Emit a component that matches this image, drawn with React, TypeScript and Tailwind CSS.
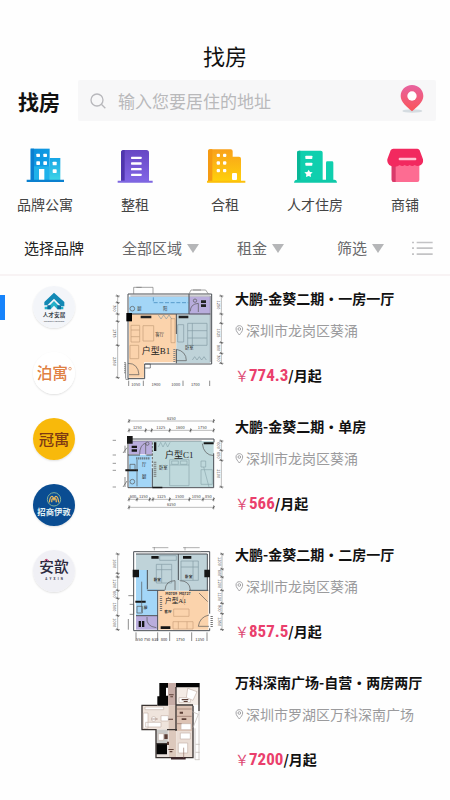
import type { ReactNode } from "react";

type Category = { label: string; icon: ReactNode };
type Brand = { name: string; logo: ReactNode };
type Listing = { title: string; address: string; price: string; plan: ReactNode };

const BLUE = "#a3d6f7";
const GREY = "#bfd3d9";
const PEACH = "#fbd3ac";
const PURPLE = "#b9addd";
const LINE = "#4a4f55";

const categories: Category[] = [
  {
    label: "品牌公寓",
    icon: (
      <svg viewBox="69 54 132 108" className="h-9 w-11" aria-hidden="true">
        <defs>
          <linearGradient id="apt" x1="0" y1="0" x2="1" y2="1">
            <stop offset="0" stopColor="#0c8fdc" />
            <stop offset="1" stopColor="#12a4ea" />
          </linearGradient>
          <linearGradient id="aptSide" x1="0" y1="0" x2="0" y2="1">
            <stop offset="0" stopColor="#16a5e6" />
            <stop offset="1" stopColor="#3fd6e6" />
          </linearGradient>
        </defs>
        <path d="M92 59h57v96H92z" fill="url(#apt)" />
        <path d="M92 59h10v96H92z" fill="#0b7fd0" />
        <path d="M102 112h47v43h-47z" fill="#1fb2ea" />
        <path d="M149 87h32v68h-32z" fill="url(#aptSide)" />
        <path d="M80 152h112v7H80z" fill="#0b80cf" />
        <g fill="#fff">
          <rect x="109" y="74" width="11" height="10" rx="2" />
          <rect x="130" y="74" width="11" height="10" rx="2" />
          <rect x="109" y="97" width="11" height="11" rx="2" />
          <rect x="130" y="97" width="11" height="11" rx="2" />
          <rect x="158" y="98" width="12" height="11" rx="2" />
          <rect x="158" y="121" width="12" height="11" rx="2" />
          <path d="M117 120h16v32h-16z" />
        </g>
      </svg>
    ),
  },
  {
    label: "整租",
    icon: (
      <svg viewBox="339 54 132 108" className="h-9 w-11" aria-hidden="true">
        <defs>
          <linearGradient id="whole" x1="0" y1="0" x2="0" y2="1">
            <stop offset="0" stopColor="#6747c4" />
            <stop offset="1" stopColor="#8266e6" />
          </linearGradient>
        </defs>
        <path d="M363 71q0-8 8-8h68q8 0 8 8v88h-84z" fill="url(#whole)" />
        <path d="M363 71q0-8 8-8h3v92h-11z" fill="#4f35ad" />
        <path d="M353 155h105v6H353z" fill="#7d66e0" />
        <g fill="#fff">
          <rect x="393" y="83" width="32" height="7" rx="2" />
          <rect x="393" y="100" width="32" height="7" rx="2" />
          <rect x="393" y="117" width="32" height="7" rx="2" />
          <rect x="393" y="134" width="32" height="7" rx="2" />
        </g>
      </svg>
    ),
  },
  {
    label: "合租",
    icon: (
      <svg viewBox="609 54 132 108" className="h-9 w-11" aria-hidden="true">
        <defs>
          <linearGradient id="share" x1="0" y1="0" x2="0" y2="1">
            <stop offset="0" stopColor="#f9a11b" />
            <stop offset="1" stopColor="#ffd20a" />
          </linearGradient>
        </defs>
        <path d="M624 67q0-6 6-6h62q6 0 6 6v16h19q6 0 6 6v71h-99z" fill="url(#share)" />
        <path d="M624 67q0-6 6-6h7v96h-13z" fill="#f59a12" />
        <path d="M621 155h115v6H621z" fill="#fcbf0c" />
        <g fill="#fff">
          <rect x="650" y="74" width="10" height="10" rx="3" />
          <rect x="669" y="74" width="10" height="10" rx="3" />
          <rect x="650" y="97" width="10" height="10" rx="3" />
          <rect x="669" y="97" width="10" height="10" rx="3" />
          <rect x="650" y="120" width="10" height="10" rx="3" />
          <rect x="669" y="120" width="10" height="10" rx="3" />
          <rect x="696" y="132" width="15" height="21" rx="3" />
        </g>
      </svg>
    ),
  },
  {
    label: "人才住房",
    icon: (
      <svg viewBox="207 54 132 108" className="h-9 w-11" aria-hidden="true">
        <path d="M219 71q0-6 6-6h65q6 0 6 6v84h-77z" fill="#0fcfae" />
        <path d="M219 71q0-6 6-6h4v90h-10z" fill="#08b797" />
        <path d="M306 101q0-4 4-4h14q4 0 4 4v56h-22z" fill="#0fcfae" />
        <path d="M210 161q1-9 9-9h112q7 0 8 9z" fill="#0fc9a9" />
        <g fill="#fff">
          <rect x="244" y="80" width="21" height="10" rx="2" />
          <rect x="244" y="101" width="21" height="9" rx="2" />
          <path d="m254 122 4 7 8 1-6 6 1 8-7-3-8 3 1-8-6-6 9-1z" />
        </g>
      </svg>
    ),
  },
  {
    label: "商铺",
    icon: (
      <svg viewBox="477 54 132 108" className="h-9 w-11" aria-hidden="true">
        <path d="M503 104h83v49q0 6-6 6h-71q-6 0-6-6z" fill="#fd6c92" />
        <path d="M503 104h12v55h-6q-6 0-6-6z" fill="#d93a6a" />
        <path
          d="M508 59h72q5 0 7 5l10 27q2 13-8 18-9 5-17-1-7 6-15 0-7 6-15 0-7 6-15 0-8 7-18 5-17-1-19-16-1-4 1-9l9-24q2-5 8-5z"
          fill="#f2295f"
        />
        <rect x="524" y="86" width="53" height="8" rx="3" fill="#ffc3d2" />
      </svg>
    ),
  },
];

const brands: Brand[] = [
  {
    name: "人才安居",
    logo: (
      <svg viewBox="99 48 126 126" className="size-full">
        <circle cx="162" cy="111" r="63" fill="#f3f5f9" />
        <path d="m162 68 31 28v13h-9l-22-23-20 20h-9V96z" fill="#1389b5" />
        <path d="M134 110h11l17-17 17 17h11v8h-18l-10-11-10 11h-18z" fill="#22b0c9" />
        <path d="M142 106h10v12h-10zM172 106h11v12h-11z" fill="#0d6f9e" />
        <text x="162" y="142" textAnchor="middle" fontSize="17" fontWeight="700" fill="#39424b">
          人才安居
        </text>
        <text x="162" y="155" textAnchor="middle" fontSize="7" fontWeight="700" fill="#59626b" className="font-[Roboto,sans-serif]">
          TALENTS HOUSING
        </text>
      </svg>
    ),
  },
  {
    name: "泊寓",
    logo: (
      <svg viewBox="99 246 126 126" className="size-full">
        <circle cx="162" cy="309" r="63" fill="#fff" />
        <text x="157" y="327" textAnchor="middle" fontSize="47" fontWeight="500" fill="#df8042">
          泊寓
        </text>
        <circle cx="210" cy="296" r="4" fill="none" stroke="#df8042" strokeWidth="2" />
      </svg>
    ),
  },
  {
    name: "冠寓",
    logo: (
      <svg viewBox="99 438 126 126" className="size-full">
        <circle cx="162" cy="501" r="63" fill="#f8b90b" />
        <text x="162" y="518" textAnchor="middle" fontSize="46" fontWeight="500" fill="#7d3a13">
          冠寓
        </text>
      </svg>
    ),
  },
  {
    name: "招商伊敦",
    logo: (
      <svg viewBox="99 156 126 126" className="size-full">
        <circle cx="162" cy="219" r="63" fill="#0a4d92" />
        <circle cx="162" cy="202" r="20" fill="none" stroke="#7fae9a" strokeWidth="3" />
        <path
          d="M148 211q2-18 8-18 4 0 6 12 2-12 6-12 6 0 8 18M155 211q0-10 3-12M169 211q0-10-3-12"
          fill="none"
          stroke="#e7b65c"
          strokeWidth="4"
        />
        <text x="162" y="250" textAnchor="middle" fontSize="25" fontWeight="700" fill="#e2f1f3">
          招商伊敦
        </text>
      </svg>
    ),
  },
  {
    name: "安歆",
    logo: (
      <svg viewBox="99 357 126 126" className="size-full">
        <circle cx="162" cy="420" r="63" fill="#f0f0f5" />
        <text x="162" y="424" textAnchor="middle" fontSize="44" fontWeight="500" fill="#2c2a3e">
          安歆
        </text>
        <path d="m133 390 7-5 7 5" fill="none" stroke="#e0457b" strokeWidth="3" />
        <text
          x="162"
          y="447"
          textAnchor="middle"
          fontSize="9"
          fontWeight="700"
          fill="#3b394c"
          className="font-[Roboto,sans-serif] whitespace-pre"
        >
          {"A   Y   X   I   N"}
        </text>
      </svg>
    ),
  },
];

type RulerProps = { at: number; stops: number[]; labels: string[]; vertical?: boolean };

// Dimension line with a tick at every stop and the measure beside each span
function Ruler({ at, stops, labels, vertical = false }: RulerProps) {
  const first = stops[0];
  const last = stops[stops.length - 1];
  return (
    <g transform={vertical ? `translate(${at} 0) rotate(90)` : `translate(0 ${at})`}>
      <path d={`M${first} 0H${last}`} stroke="#777" strokeWidth="1.5" />
      {stops.map((stop) => (
        <path key={stop} d={`M${stop} -6v12M${stop - 4} 3l8-6`} stroke="#444" strokeWidth="2" />
      ))}
      {labels.map((label, i) => (
        <text
          key={i}
          x={(stops[i] + stops[i + 1]) / 2}
          y={vertical ? 13 : -3}
          fontSize="12"
          textAnchor="middle"
          fill="#444"
        >
          {label}
        </text>
      ))}
    </g>
  );
}

function PlanB1() {
  return (
    <svg viewBox="0 -12 375 384" className="h-32 w-[125px] shrink-0" role="img" aria-label="户型B1">
      <Ruler at={38} vertical stops={[48, 68, 102, 124, 196, 293]} labels={["", "700", "", "1775", "2350"]} />
      <Ruler at={349} vertical stops={[48, 102, 130, 188, 220, 250]} labels={["1250", "", "1025", "900", "700"]} />
      <path d="M72 50h180v52H72z" fill={BLUE} />
      <path d="M252 50h64v54h-64z" fill={PURPLE} />
      <path d="M72 102h142v145h-97v46H72z" fill={PEACH} />
      <path d="M214 104h102v145H214z" fill={GREY} />
      <g fill="none" stroke={LINE} strokeWidth="3">
        <path d="M69 42h251v210H119v44H69zM252 42v60M214 102v60M214 208v42M69 102h247" />
        <path d="M76 48h240v198" strokeWidth="1.5" />
        <path d="M119 252h17v12h-17M62 250v46M62 298h10" strokeWidth="2" />
      </g>
      <path d="M86 42V22h58v20M252 42l6-12h44l8 12M94 22h16M264 30h24" fill="none" stroke="#777" strokeWidth="2" />
      <path d="M145 52v16h105" fill="none" stroke="#347fb5" strokeWidth="2" strokeDasharray="12 5" />
      <path d="M64 99h17v25H64z" />
      <path d="M107 107h32v8h-32zM221 107h29v8h-29zM288 61h15v8h-15zM288 73h15v8h-15z" fill="#222" />
      <g fill="none" stroke="#c49f79" strokeWidth="2">
        <path d="M114 137h32v46h-32zM78 136h26v50H78zM78 150h26M78 170h26M75 196h26v40H75zM198 116h12v72h-12z" />
      </g>
      <g fill="none" stroke="#839ca5" strokeWidth="2">
        <path d="M248 130h58v66h-58zM262 130v66M248 152h58M248 174h58M218 134h18v52h-18z" />
        <path d="m262 240 7-10 7 10 7-10 7 10 7-10 7 10M160 105l8 12 8-12 8 12 8-12 8 12" />
      </g>
      <g fill="none" stroke="#555" strokeWidth="2">
        <path d="M69 250q30 0 33 34H72M214 208q30 6 30 34h-30M256 94q0-22 24-24v26" />
        <circle cx="82" cy="86" r="7" />
        <circle cx="270" cy="62" r="5" />
      </g>
      <path d="M60 280v-36M208 246v-40" stroke="#888" strokeWidth="6" strokeDasharray="3 3" />
      <g fontSize="13" fill="#333">
        <text x="97" y="89">厨</text>
        <text x="174" y="89">阳</text>
        <text x="151" y="168">客厅</text>
        <text x="240" y="206">卧室</text>
      </g>
      <text x="110" y="223" fontSize="27" fill="#222" className="font-['Liberation_Serif','Noto_Sans_CJK_SC',serif]">
        户型B1
      </text>
      <g fontSize="12" fill="#444" textAnchor="middle">
        <text x="92" y="318">1050</text>
        <text x="153" y="318">1900</text>
        <text x="212" y="318">1000</text>
        <text x="271" y="318">1700</text>
      </g>
      <path d="M71 302v16M115 302v16M234 302v16M314 302v16" stroke="#555" strokeWidth="2" />
    </svg>
  );
}

function PlanC1() {
  return (
    <svg viewBox="0 -3 375 384" className="h-32 w-[125px] shrink-0" role="img" aria-label="户型C1">
      <Ruler at={48} stops={[72, 326]} labels={["6350"]} />
      <Ruler at={76} stops={[72, 122, 140, 194, 257, 326]} labels={["1250", "", "1325", "1600", "1750"]} />
      <Ruler at={283} stops={[72, 96, 134, 144, 194, 253, 294, 326]} labels={["600", "1350", "", "1325", "1500", "1050", "850"]} />
      <Ruler at={307} stops={[72, 326]} labels={["6350"]} />
      <Ruler at={349} vertical stops={[108, 136, 166, 246]} labels={["600", "650", "2100"]} />
      <path d="M23 106h10M23 150h10M23 175h10M23 196h10M23 246h10" stroke="#666" strokeWidth="2" />
      <path d="M72 108h70v40H72z" fill={PURPLE} />
      <path d="M72 150h68v96H72z" fill={BLUE} />
      <path d="M142 108h184v138H142z" fill="#bfd9dc" />
      <g fill="none" stroke={LINE} strokeWidth="3">
        <path d="M69 102h258v10M69 102v146h257V145M69 150h36M124 150h18M142 190v56" />
        <path d="M82 108h208" strokeWidth="1.5" />
      </g>
      <path d="M142 112v78" stroke="#666" strokeWidth="3" strokeDasharray="7 4" />
      <path d="M66 93h17v23H66zM147 112h7v26h-7zM61 193h38v6H61zM296 112h30v6h-30zM80 122h16v7H80zM80 133h16v7H80zM142 245h30v5h-30z" fill="#171717" />
      <g fill="none" stroke="#555" strokeWidth="2">
        <path d="M292 116q4 34 34 36M104 148q0-28 18-34v34" />
        <path d="M75 178h15v16H75zM96 164v80" />
        <circle cx="82" cy="230" r="7" />
        <circle cx="127" cy="116" r="5" />
        <path d="M60 122v22M60 216v30M54 144l12-16M54 246l12-18" />
      </g>
      <g fill="none" stroke="#8ba8ad" strokeWidth="2">
        <path d="M194 164h58v78h-58zM194 180h58M200 168h20v10h-20zM226 168h20v10h-20z" />
        <path d="m160 126 7-14 7 14 7-14 7 14 7-14M302 168h-14v18h14zM288 194h34v44h-34zM296 186l16 60" />
      </g>
      <path d="M150 170v46" stroke="#777" strokeWidth="8" strokeDasharray="3 3" />
      <path d="M94 160h40" stroke="#555" strokeWidth="7" strokeDasharray="3 3" />
      <g fontSize="13" fill="#222">
        <text x="111" y="182">厅</text>
        <text x="111" y="219">厨</text>
        <text x="162" y="191">卧室</text>
      </g>
      <text x="180" y="159" fontSize="27" fill="#222" className="font-['Liberation_Serif','Noto_Sans_CJK_SC',serif]">
        户型C1
      </text>
    </svg>
  );
}

function PlanA1() {
  return (
    <svg viewBox="0 -9 375 384" className="h-32 w-[125px] shrink-0" role="img" aria-label="户型A1">
      <Ruler at={38} vertical stops={[57, 115, 126, 166, 190, 242, 284]} labels={["1600", "", "1200", "600", "1500", "1000"]} />
      <Ruler at={351} vertical stops={[57, 102, 126, 166, 205, 236, 284]} labels={["1200", "600", "1200", "1100", "800", "1350"]} />
      <path d="M93 57h130v110H93z" fill={GREY} />
      <path d="M223 57h84v110h-84z" fill={GREY} />
      <path d="M93 105h34v58h30v78H93z" fill={BLUE} />
      <path d="M93 242h66v42H93z" fill={PURPLE} />
      <path d="M160 168h150v116H160z" fill={PEACH} />
      <g fill="none" stroke={LINE} strokeWidth="3">
        <path d="M86 50h228v186M314 280v7H86V50M93 57h214v110M220 57v78M127 105v58M158 166v120M93 242h66" />
        <path d="M127 166h52M252 166h58" />
      </g>
      <path d="M104 50h76M204 50h84M142 38h48M234 38h50M148 36v10M240 36v10" stroke="#888" strokeWidth="2" />
      <path d="M83 104h19v23H83zM298 104h17v23h-17zM139 63h22v8h-22zM234 63h25v8h-25zM91 197h31v6H91zM167 274h29v8h-29zM101 258h7v18h-7zM111 258h7v18h-7z" fill="#151515" />
      <g fill="none" stroke="#839ca5" strokeWidth="2">
        <path d="M154 88h46v56h-46zM154 104h46M170 88v56M228 78h52v58h-52zM264 78v58M228 96h52M164 62h50v14h-50z" />
      </g>
      <g fill="none" stroke="#cba27b" strokeWidth="2">
        <path d="M206 222h46v22h-46zM204 260h60v22h-60zM220 260v22M246 260v22M240 176q-14 20 0 34" />
      </g>
      <g fill="none" stroke="#555" strokeWidth="2">
        <path d="M180 165q2-28 30-28v28M224 137q30 0 32 28M282 174l26 26M280 274q4-28 32-34M280 274h32M126 246q-4 28 28 32" />
        <path d="M96 214h16v20H96zM110 140v92M70 182h16M74 208h12v30H74M70 252v32" />
      </g>
      <path d="M320 276v-36M168 228v-44" stroke="#777" strokeWidth="7" strokeDasharray="3 3" />
      <g fontSize="11" fontWeight="700" fill="#333">
        <text x="181" y="179">M0709</text>
        <text x="222" y="179">M0727</text>
        <text x="146" y="138">卧室</text>
        <text x="240" y="130">卧室</text>
        <text x="178" y="234">客厅</text>
        <text x="116" y="222">厨</text>
      </g>
      <text x="180" y="205" fontSize="20" fill="#222" className="font-['Liberation_Serif','Noto_Sans_CJK_SC',serif]">
        户型A1
      </text>
      <g fontSize="12" fill="#333" textAnchor="middle">
        <text x="103" y="318">550</text>
        <text x="126" y="318">750</text>
        <text x="150" y="318">630</text>
        <text x="177" y="318">800</text>
        <text x="226" y="318">1750</text>
        <text x="284" y="318">1350</text>
      </g>
      <path d="M93 292v26M158 292v26M194 292v26M260 292v26M306 292v26" stroke="#555" strokeWidth="2" />
    </svg>
  );
}

function PlanVanke() {
  return (
    <svg viewBox="0 -15 375 384" className="h-32 w-[125px] shrink-0" role="img" aria-label="两房两厅户型图">
      <path d="M189 54h24v68h-24z" fill="#c6aca6" />
      <path d="M215 66h68v54h-68z" fill="#f4ece6" />
      <path d="M112 122h104v72H112z" fill="#efe4dc" />
      <path d="M191 122h23v156h-23z" fill="#dcc8bc" />
      <path d="M214 122h48v76h-48z" fill="#ddc3b4" />
      <path d="M214 198h50v78h-50z" fill="#eaddd5" />
      <path d="M154 194h38v84h-38z" fill="#e9e1dc" />
      <path d="M154 194h34v40h-34z" fill="#c9c9c7" />
      <path d="M163 54h26v14h-6v24h6v30h-32V94h6zM213 54h71v13h-71zM154 237h32v31h-32z" fill="#050505" />
      <g fill="none" stroke="#3b3432" strokeWidth="4">
        <path d="M157 121h-46v73h42v84h111v-80M213 66v54h51M282 66v72M186 194h30M213 122v76M264 122v76M154 236h34" />
      </g>
      <path d="M282 138v146M270 190v94h14M262 140l18 8-16 40M272 238h12M272 262h12" fill="none" stroke="#bbb3af" strokeWidth="2" />
      <path d="M198 280h44" stroke="#3a2428" strokeWidth="7" />
      <g fill="#fff" stroke="#c5b4aa" strokeWidth="2">
        <path d="M115 144h14v46h-14zM122 172h46v14h-46zM220 234h28v30h-28zM222 98h34v14h-34zM228 176h30v18h-30zM160 206h16v20h-16z" />
        <circle cx="146" cy="162" r="7" />
        <path d="M168 152h22v16h-22zM248 70l28 10-12 26-20-8zM120 126h56v8h-56zM226 204h30v18h-30z" />
      </g>
      <g fill="#5b3e36">
        <path d="M192 88h14v3h-14zM196 94h8v3h-8zM230 102h20v4h-20zM236 108h12v3h-12zM224 140h10v6h-10zM230 160h14v5h-14zM190 161h14v3h-14zM178 208h10v14h-10zM190 252h16v3h-16zM194 258h8v4h-8zM186 230h6v10h-6z" />
      </g>
      <path d="M236 248v30M140 162h18M216 132h44M216 154h44M216 176h14" stroke="#8f7065" strokeWidth="2" />
    </svg>
  );
}

const listings: Listing[] = [
  { title: "大鹏-金葵二期・一房一厅", address: "深圳市龙岗区葵涌", price: "774.3", plan: <PlanB1 /> },
  { title: "大鹏-金葵二期・单房", address: "深圳市龙岗区葵涌", price: "566", plan: <PlanC1 /> },
  { title: "大鹏-金葵二期・二房一厅", address: "深圳市龙岗区葵涌", price: "857.5", plan: <PlanA1 /> },
  { title: "万科深南广场-自营・两房两厅", address: "深圳市罗湖区万科深南广场", price: "7200", plan: <PlanVanke /> },
];

function SearchBar() {
  return (
    <div className="mt-2 flex items-center gap-[18px] pr-[14px] pl-[18px]">
      <h2 className="shrink-0 text-[21px] leading-8 font-bold">找房</h2>
      <div className="flex h-[41px] min-w-0 flex-1 items-center rounded-xs bg-[#f7f7f8] px-3">
        <svg viewBox="0 0 48 48" className="size-4 shrink-0" fill="none" stroke="#b8b8bc" strokeWidth="4" aria-hidden="true">
          <circle cx="21" cy="21" r="18" />
          <path d="m34 34 12 12" />
        </svg>
        <input
          type="search"
          aria-label="搜索地址"
          placeholder="输入您要居住的地址"
          className="ml-3 min-w-0 flex-1 bg-transparent text-[17px] leading-6 outline-none placeholder:text-[#b9b9bb]"
        />
        <button type="button" aria-label="定位" className="shrink-0 pb-1">
          <svg viewBox="0 0 72 84" className="h-7 w-6">
            <defs>
              <linearGradient id="pin" x1="0" y1="0" x2="0" y2="1">
                <stop offset="0" stopColor="#e763a0" />
                <stop offset="1" stopColor="#fb5457" />
              </linearGradient>
            </defs>
            <ellipse cx="37" cy="78" rx="30" ry="5" fill="#d5dce1" />
            <path d="M36 0C16 0 2 15 2 33c0 19 20 33 34 46 14-13 34-27 34-46C70 15 56 0 36 0z" fill="url(#pin)" />
            <circle cx="36" cy="33" r="14" fill="#fff" />
          </svg>
        </button>
      </div>
    </div>
  );
}

function FilterSelect({ label }: { label: string }) {
  return (
    <label className="flex items-center gap-1 text-[#68686a]">
      <select aria-label={label} className="appearance-none bg-transparent text-[15px] leading-6 outline-none">
        <option>{label}</option>
      </select>
      <svg viewBox="0 0 12 9" className="h-[9px] w-3 shrink-0" fill="#b5b6b8" aria-hidden="true">
        <path d="M0 0h12L6 9z" />
      </svg>
    </label>
  );
}

function ListingRow({ title, address, price, plan }: Listing) {
  return (
    <li className="flex h-32 gap-[5px]">
      {plan}
      <div className="min-w-0 flex-1 pt-3">
        <h3 className="text-sm leading-5 font-bold">{title}</h3>
        <p className="mt-3 flex items-center gap-[2px] text-sm leading-5 text-[#9b9b9d]">
          <svg viewBox="0 0 27 33" className="h-[11px] w-[9px] shrink-0" fill="none" stroke="#a5a5a8" strokeWidth="3" aria-hidden="true">
            <path d="M13 2C7 2 3 6 3 12c0 7 6 12 10 18 4-6 10-11 10-18 0-6-4-10-10-10z" />
            <circle cx="13" cy="12" r="4" />
          </svg>
          {address}
        </p>
        <p className="mt-6 flex items-baseline text-sm leading-[22px] font-bold">
          <span className="font-normal text-[#dd4a74]">￥</span>
          <span className="font-['Roboto_Condensed','Liberation_Sans',sans-serif] text-[17px] leading-[22px] text-[#ea3f6c]">
            {price}
          </span>
          <span>/月起</span>
        </p>
      </div>
    </li>
  );
}

export default function App() {
  return (
    <main className="min-h-screen bg-[#fefefe] pt-[38px] font-['Noto_Sans_CJK_SC',sans-serif] text-[#111]">
      <h1 className="text-center text-[22px] leading-[34px]">找房</h1>
      <SearchBar />

      <nav className="mt-[26px] grid grid-cols-5">
        {categories.map(({ label, icon }) => (
          <a key={label} href="#" className="flex flex-col items-center gap-2.5 text-sm leading-[22px] text-[#444]">
            {icon}
            {label}
          </a>
        ))}
      </nav>

      <div className="mt-[7px] grid h-[54px] grid-cols-[98fr_115fr_100fr_75fr_21fr] items-center border-b-2 border-[#f8f3f4] pr-[17px] pl-6">
        <button type="button" className="text-left text-[15px] leading-6 text-[#222]">
          选择品牌
        </button>
        <FilterSelect label="全部区域" />
        <FilterSelect label="租金" />
        <FilterSelect label="筛选" />
        <button type="button" aria-label="列表视图">
          <svg viewBox="0 0 63 45" className="h-[15px] w-[21px]" fill="#c3c3c5">
            <path d="M0 2h6v5H0zM14 2h48v5H14zM0 19h6v5H0zM14 19h48v5H14zM0 37h6v5H0zM14 37h48v5H14z" />
          </svg>
        </button>
      </div>

      <div className="flex">
        <ul className="flex w-[105px] shrink-0 flex-col gap-6 pt-2.5">
          {brands.map(({ name, logo }, i) => (
            <li key={name} className="flex items-center gap-7">
              <span className={i === 0 ? "h-[25px] w-[5px] bg-[#1683fb]" : "w-[5px]"} />
              <button type="button" aria-label={name} className="size-[42px] rounded-full shadow-[0_1px_2px_rgba(0,0,0,0.12)]">
                {logo}
              </button>
            </li>
          ))}
        </ul>
        <ul className="min-w-0 flex-1">
          {listings.map((listing) => (
            <ListingRow key={listing.title} {...listing} />
          ))}
        </ul>
      </div>
    </main>
  );
}
